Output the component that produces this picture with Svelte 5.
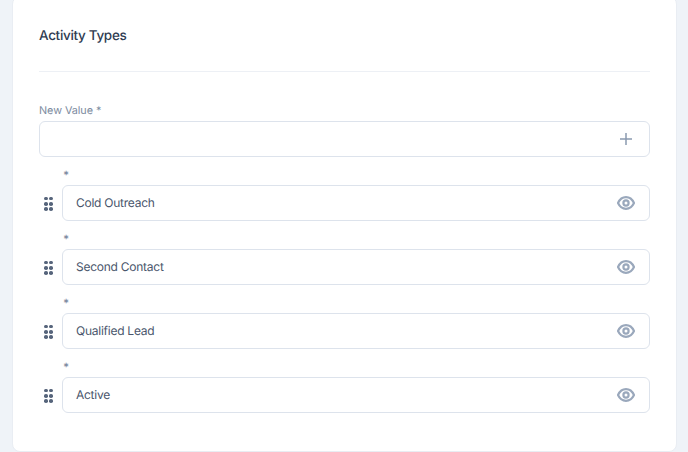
<script>
  const items = ['Cold Outreach', 'Second Contact', 'Qualified Lead', 'Active'];
</script>

<div class="page">
  <section class="card">
    <h2 class="title">Activity Types</h2>
    <hr class="divider" />

    <div class="new-value">
      <span class="label">New Value *</span>
      <div class="input">
        <span class="text"></span>
        <svg class="plus" width="14" height="14" viewBox="0 0 14 14" aria-hidden="true">
          <path d="M7 1v12M1 7h12" />
        </svg>
      </div>
    </div>

    <div class="rows">
      {#each items as item}
        <div class="row">
          <div class="grip">
            {#each Array(6) as _}
              <i></i>
            {/each}
          </div>
          <div class="field">
            <span class="star">*</span>
            <div class="input">
              <span class="text">{item}</span>
              <svg class="eye" width="18" height="14" viewBox="0 0 18 14" aria-hidden="true">
                <path d="M1 7C2.8 3.2 5.6 1.2 9 1.2S15.2 3.2 17 7c-1.8 3.8-4.6 5.8-8 5.8S2.8 10.8 1 7Z" />
                <circle cx="9" cy="7" r="2.6" />
              </svg>
            </div>
          </div>
        </div>
      {/each}
    </div>
  </section>
</div>

<style>
  :global(body) {
    margin: 0;
    background: #eff3f8;
    font-family: Inter, "Noto Sans", sans-serif;
    text-rendering: geometricPrecision;
  }

  .page {
    height: 452px;
    padding: 0 11px 0 12px;
    box-sizing: border-box;
    overflow: hidden;
  }

  .card {
    height: 456px;
    margin-top: -4px;
    box-sizing: border-box;
    padding: 29px 26px 0;
    background: #fff;
    border: 1px solid #e9edf3;
    border-radius: 8px;
  }

  .title {
    margin: 0;
    font-size: 13.5px;
    line-height: 20px;
    font-weight: 500;
    letter-spacing: -0.32px;
    color: #2f3c52;
  }

  .divider {
    margin: 25px 0 0;
    border: 0;
    border-top: 1px solid #edf0f5;
  }

  .new-value {
    margin-top: 31px;
  }

  .label {
    display: block;
    font-size: 10.8px;
    line-height: 16px;
    letter-spacing: -0.05px;
    color: #7d8ba0;
    margin-bottom: 2px;
  }

  .input {
    height: 36px;
    box-sizing: border-box;
    display: flex;
    align-items: center;
    justify-content: space-between;
    padding: 0 14px 0 13px;
    background: #fff;
    border: 1px solid #dde3ec;
    border-radius: 6px;
  }

  .text {
    font-size: 12px;
    letter-spacing: -0.25px;
    line-height: 16px;
    margin-top: -1px;
    color: #4a566c;
  }

  .plus {
    fill: none;
    stroke: #8b9ab0;
    stroke-width: 1.5;
    margin-right: 2px;
  }

  .eye {
    fill: none;
    stroke: #9aa8bc;
    stroke-width: 2.2;
    margin-top: -1px;
  }

  .rows {
    margin-top: 12px;
    display: flex;
    flex-direction: column;
    gap: 12px;
  }

  .row {
    display: flex;
    align-items: flex-end;
    gap: 9px;
    margin-left: 5px;
  }

  .grip {
    display: grid;
    grid-template-columns: repeat(2, 3.6px);
    gap: 1.8px;
    margin-bottom: 10px;
  }

  .grip i {
    width: 3.6px;
    height: 3.6px;
    border-radius: 50%;
    background: #56647b;
  }

  .field {
    flex: 1;
  }

  .star {
    display: block;
    height: 16px;
    margin-left: 1px;
    font-size: 11.5px;
    line-height: 12px;
    font-weight: 600;
    color: #7f8da3;
  }
</style>
